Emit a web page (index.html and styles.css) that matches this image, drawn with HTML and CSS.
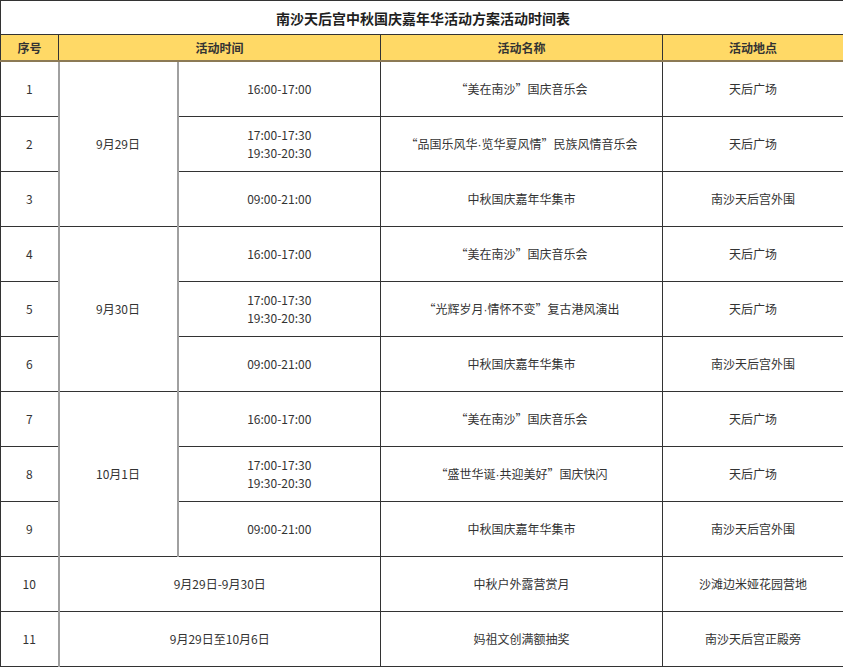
FILE: index.html
```html
<!DOCTYPE html>
<html lang="zh-CN">
<head>
<meta charset="utf-8">
<title>南沙天后宫中秋国庆嘉年华活动方案活动时间表</title>
<link rel="stylesheet" href="styles.css">
</head>
<body>
<table class="sched">
  <colgroup>
    <col class="c-no"><col class="c-date"><col class="c-time"><col class="c-name"><col class="c-place">
  </colgroup>
  <thead>
    <tr class="title-row"><th colspan="5">南沙天后宫中秋国庆嘉年华活动方案活动时间表</th></tr>
    <tr class="head-row">
      <th>序号</th><th colspan="2">活动时间</th><th>活动名称</th><th>活动地点</th>
    </tr>
  </thead>
  <tbody>
    <tr class="first">
      <td class="no">1</td><td class="date" rowspan="3">9月29日</td><td class="time">16:00-17:00</td>
      <td>“美在南沙”国庆音乐会</td><td>天后广场</td>
    </tr>
    <tr class="inner">
      <td class="no">2</td><td class="time">17:00-17:30<br>19:30-20:30</td>
      <td>“品国乐风华<span class="dot">·</span>览华夏风情”民族风情音乐会</td><td>天后广场</td>
    </tr>
    <tr class="inner">
      <td class="no">3</td><td class="time">09:00-21:00</td>
      <td>中秋国庆嘉年华集市</td><td>南沙天后宫外围</td>
    </tr>
    <tr class="first">
      <td class="no">4</td><td class="date" rowspan="3">9月30日</td><td class="time">16:00-17:00</td>
      <td>“美在南沙”国庆音乐会</td><td>天后广场</td>
    </tr>
    <tr class="inner">
      <td class="no">5</td><td class="time">17:00-17:30<br>19:30-20:30</td>
      <td>“光辉岁月<span class="dot">·</span>情怀不变”复古港风演出</td><td>天后广场</td>
    </tr>
    <tr class="inner">
      <td class="no">6</td><td class="time">09:00-21:00</td>
      <td>中秋国庆嘉年华集市</td><td>南沙天后宫外围</td>
    </tr>
    <tr class="first">
      <td class="no">7</td><td class="date" rowspan="3">10月1日</td><td class="time">16:00-17:00</td>
      <td>“美在南沙”国庆音乐会</td><td>天后广场</td>
    </tr>
    <tr class="inner">
      <td class="no">8</td><td class="time">17:00-17:30<br>19:30-20:30</td>
      <td>“盛世华诞<span class="dot">·</span>共迎美好”国庆快闪</td><td>天后广场</td>
    </tr>
    <tr class="inner">
      <td class="no">9</td><td class="time">09:00-21:00</td>
      <td>中秋国庆嘉年华集市</td><td>南沙天后宫外围</td>
    </tr>
    <tr class="first">
      <td class="no">10</td><td class="span" colspan="2">9月29日-9月30日</td>
      <td>中秋户外露营赏月</td><td>沙滩边米娅花园营地</td>
    </tr>
    <tr class="first">
      <td class="no">11</td><td class="span" colspan="2">9月29日至10月6日</td>
      <td>妈祖文创满额抽奖</td><td>南沙天后宫正殿旁</td>
    </tr>
  </tbody>
</table>
</body>
</html>
```

FILE: styles.css
```css
html, body {
  margin: 0;
  padding: 0;
  background: #ffffff;
}
body {
  font-family: "Noto Sans CJK SC", "Noto Sans", sans-serif;
  color: #333333;
}
.sched {
  width: 843px;
  table-layout: fixed;
  border-collapse: collapse;
  font-size: 12px;
}
.c-no { width: 58px; }
.c-date { width: 119px; }
.c-time { width: 203px; }
.c-name { width: 282px; }
.c-place { width: 181px; }

.sched th, .sched td {
  border: 1px solid #333333;
  text-align: center;
  vertical-align: middle;
  padding: 0;
  line-height: 18px;
}
.title-row th {
  height: 33px;
  font-size: 14px;
  font-weight: bold;
  color: #1f1f1f;
  padding-left: 2px;
}
.head-row th {
  height: 25px;
  background: #ffd966;
  font-weight: bold;
  color: #333333;
  border-bottom: 2px solid #8c7a55;
}
.sched tbody td {
  height: 54px;
}
.sched tbody tr.inner td {
  border-top: 1px solid #8a8a8a;
}
.sched tbody td.no {
  border-right: 2px solid #a0a0a0;
}
.sched tbody td.date {
  border-right: 2px solid #a0a0a0;
  border-left: 2px solid #a0a0a0;
}
.sched tbody td.span {
  border-left: 2px solid #a0a0a0;
}
.dot {
  font-family: "Liberation Sans", sans-serif;
}
```
